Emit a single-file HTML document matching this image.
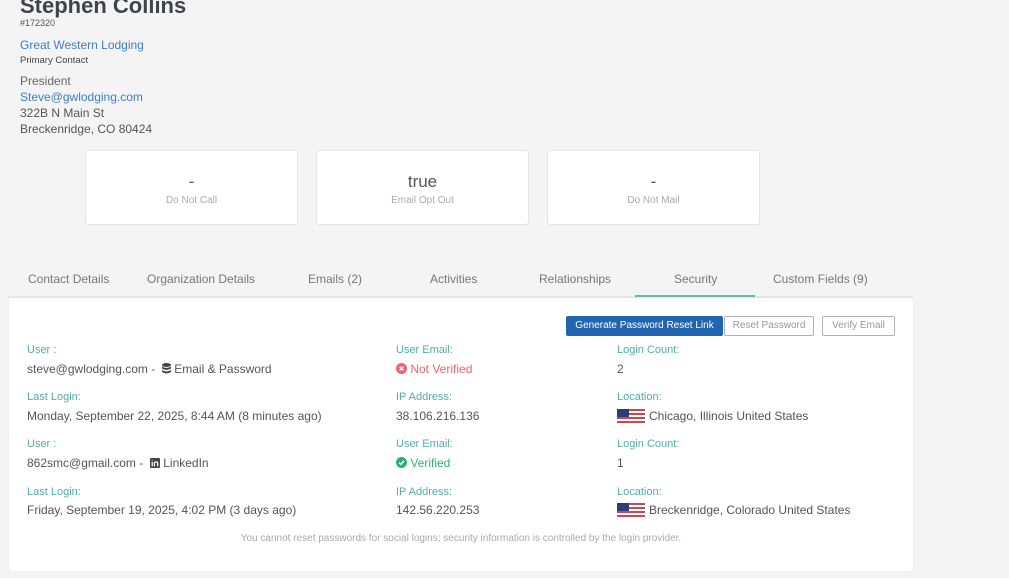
<!DOCTYPE html>
<html><head><meta charset="utf-8"><style>
body{margin:0;width:1009px;height:578px;background:#f4f4f4;font-family:"Liberation Sans",sans-serif;position:relative;overflow:hidden;color:#555}
.a{position:absolute;white-space:nowrap}
.card{position:absolute;top:150px;width:211px;height:73px;background:#fff;border:1px solid #e4e4e4;border-radius:3px;text-align:center}
.card .v{margin-top:21px;font-size:17px;color:#555;height:19px}
.card .l{margin-top:4px;font-size:10px;color:#aaa}
.tab{position:absolute;top:272px;font-size:12px;color:#777}
.lab{position:absolute;font-size:11px;color:#4fb0a2}
.val{position:absolute;font-size:12px;color:#555;white-space:nowrap}
.btn{position:absolute;top:316px;height:18px;font-size:10px;line-height:18px;text-align:center;border-radius:2px}
.flag{display:inline-block;width:28px;height:14px;vertical-align:-3px;margin-right:4px;background:repeating-linear-gradient(#d0464e 0 2px,#fff 2px 4px);position:relative}
.flag:before{content:"";position:absolute;left:0;top:0;width:12px;height:8px;background:#2c3e7a}
</style></head><body>
<div class="a" style="left:20px;top:-7px;font-size:22px;font-weight:bold;color:#3f444a">Stephen Collins</div>
<div class="a" style="left:20px;top:18px;font-size:9px;color:#555">#172320</div>
<div class="a" style="left:20px;top:38px;font-size:12px;color:#3d7ec4">Great Western Lodging</div>
<div class="a" style="left:20px;top:55px;font-size:9.5px;color:#444">Primary Contact</div>
<div class="a" style="left:20px;top:74px;font-size:12px;color:#666">President</div>
<div class="a" style="left:20px;top:90px;font-size:12px;color:#3d7ec4">Steve@gwlodging.com</div>
<div class="a" style="left:20px;top:106px;font-size:12px;color:#555">322B N Main St</div>
<div class="a" style="left:20px;top:122px;font-size:12px;color:#555">Breckenridge, CO 80424</div>

<div class="card" style="left:85px"><div class="v">-</div><div class="l">Do Not Call</div></div>
<div class="card" style="left:316px"><div class="v">true</div><div class="l">Email Opt Out</div></div>
<div class="card" style="left:547px"><div class="v">-</div><div class="l">Do Not Mail</div></div>

<div class="tab" style="left:28px">Contact Details</div>
<div class="tab" style="left:147px">Organization Details</div>
<div class="tab" style="left:308px">Emails (2)</div>
<div class="tab" style="left:430px">Activities</div>
<div class="tab" style="left:539px">Relationships</div>
<div class="tab" style="left:674px">Security</div>
<div class="tab" style="left:773px">Custom Fields (9)</div>
<div class="a" style="left:8px;top:296px;width:905px;height:2px;background:#e6e6e6"></div>
<div class="a" style="left:635px;top:295px;width:120px;height:2px;background:#5bbfb3"></div>

<div class="a" style="left:9px;top:298px;width:904px;height:273px;background:#fff;border-radius:0 0 3px 3px;box-shadow:0 0 1px #ddd"></div>

<div class="btn" style="left:566px;width:155px;background:#2264b0;color:#fff;border:1px solid #2264b0">Generate Password Reset Link</div>
<div class="btn" style="left:724px;width:88px;border:1px solid #aab4c2;color:#999;background:#fff">Reset Password</div>
<div class="btn" style="left:822px;width:71px;border:1px solid #aab4c2;color:#999;background:#fff">Verify Email</div>

<div class="lab" style="left:27px;top:344px">User :</div>
<div class="val" style="left:27px;top:362px">steve@gwlodging.com - &nbsp;<svg width="9" height="11" viewBox="0 0 9 11" style="vertical-align:-1px"><ellipse cx="4.5" cy="2" rx="4.5" ry="2" fill="#444"/><path d="M0 3.5q4.5 3 9 0v2q-4.5 3-9 0zM0 7q4.5 3 9 0v2q-4.5 3-9 0z" fill="#444"/></svg> Email &amp; Password</div>
<div class="lab" style="left:396px;top:344px">User Email:</div>
<div class="val" style="left:396px;top:362px;color:#f0636e"><svg width="11" height="11" viewBox="0 0 10 10" style="vertical-align:-1px"><circle cx="5" cy="5" r="5" fill="#f0636e"/><path d="M3.3 3.3l3.4 3.4M6.7 3.3l-3.4 3.4" stroke="#fff" stroke-width="1.4"/></svg> Not Verified</div>
<div class="lab" style="left:617px;top:344px">Login Count:</div>
<div class="val" style="left:617px;top:362px">2</div>

<div class="lab" style="left:27px;top:391px">Last Login:</div>
<div class="val" style="left:27px;top:409px">Monday, September 22, 2025, 8:44 AM (8 minutes ago)</div>
<div class="lab" style="left:396px;top:391px">IP Address:</div>
<div class="val" style="left:396px;top:409px">38.106.216.136</div>
<div class="lab" style="left:617px;top:391px">Location:</div>
<div class="val" style="left:617px;top:409px"><span class="flag"></span>Chicago, Illinois United States</div>

<div class="lab" style="left:27px;top:438px">User :</div>
<div class="val" style="left:27px;top:456px">862smc@gmail.com - &nbsp;<svg width="10" height="10" viewBox="0 0 9 9" style="vertical-align:-1px"><rect width="9" height="9" rx="1" fill="#444"/><path d="M2 3.5v4M2 1.8v.6M4 7.5v-4M4 5q0-1.5 1.5-1.5T7 5v2.5" stroke="#fff" stroke-width="1.1" fill="none"/></svg> LinkedIn</div>
<div class="lab" style="left:396px;top:438px">User Email:</div>
<div class="val" style="left:396px;top:456px;color:#29b36e"><svg width="11" height="11" viewBox="0 0 10 10" style="vertical-align:-1px"><circle cx="5" cy="5" r="5" fill="#29b36e"/><path d="M2.8 5.1l1.5 1.5 3-3" stroke="#fff" stroke-width="1.4" fill="none"/></svg> Verified</div>
<div class="lab" style="left:617px;top:438px">Login Count:</div>
<div class="val" style="left:617px;top:456px">1</div>

<div class="lab" style="left:27px;top:486px">Last Login:</div>
<div class="val" style="left:27px;top:503px">Friday, September 19, 2025, 4:02 PM (3 days ago)</div>
<div class="lab" style="left:396px;top:486px">IP Address:</div>
<div class="val" style="left:396px;top:503px">142.56.220.253</div>
<div class="lab" style="left:617px;top:486px">Location:</div>
<div class="val" style="left:617px;top:503px"><span class="flag"></span>Breckenridge, Colorado United States</div>

<div class="a" style="left:9px;width:904px;top:533px;text-align:center;font-size:10px;color:#aaa">You cannot reset passwords for social logins; security information is controlled by the login provider.</div>
</body></html>
